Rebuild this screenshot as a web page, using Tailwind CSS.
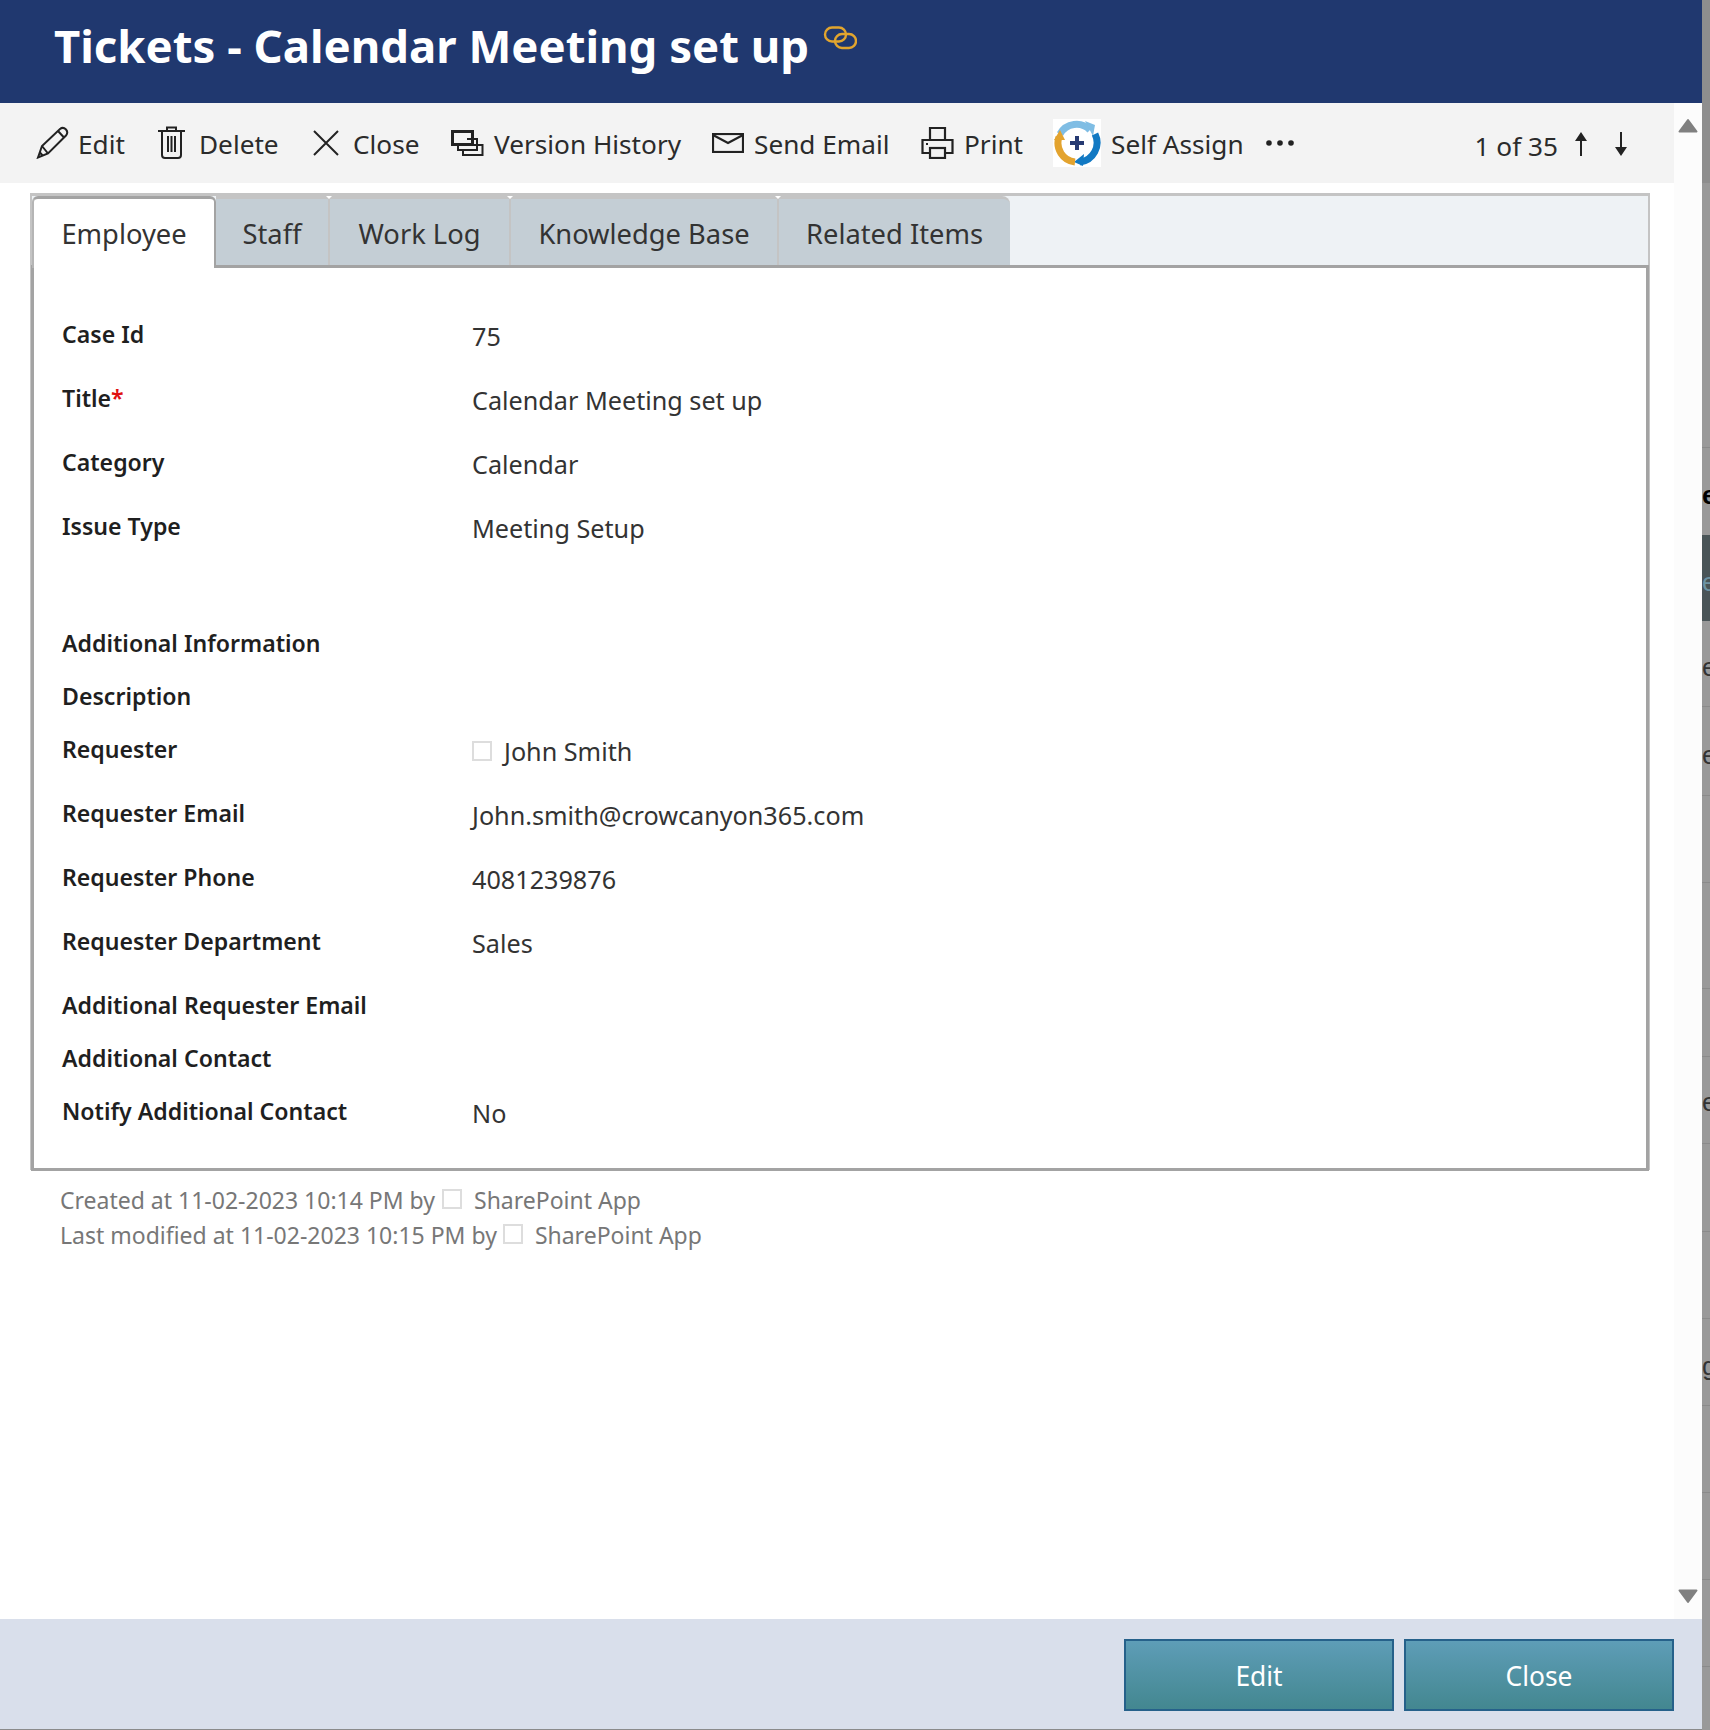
<!DOCTYPE html>
<html lang="en">
<head>
  <meta charset="UTF-8">
  <title>Tickets - Calendar Meeting set up</title>
  <script src="https://cdn.jsdelivr.net/npm/@tailwindcss/browser@4"></script>
</head>
<body class="bg-white">
<div class="w-[1710px] h-[1730px] flex overflow-hidden font-['Noto_Sans','Open_Sans',sans-serif] text-[#2b2b2b]">

  <!-- dialog -->
  <div class="w-[1702px] h-full flex flex-col shrink-0">
    <header class="h-[103px] shrink-0 bg-[#20386f] pl-[54px] pt-[14px] flex items-start">
      <h1 class="text-[45.5px] leading-[62px] font-bold text-white">Tickets - Calendar Meeting set up</h1>
      <svg class="ml-[14px] mt-[12px]" width="34" height="24" viewBox="0 0 34 24" fill="none" stroke="#e2a52e" stroke-width="2.4">
        <rect x="2" y="1.5" width="21" height="14" rx="7"/>
        <rect x="12" y="8" width="21" height="14" rx="7"/>
      </svg>
    </header>

    <div class="flex-1 flex min-h-0">
      <main class="w-[1674px] flex flex-col">
        <!-- toolbar -->
        <div class="h-[80px] shrink-0 bg-[#f3f3f3] flex items-center pl-[36px] text-[26.2px] text-[#2b2b2b]">
          <div class="w-[122px] flex items-center gap-[9px]">
            <svg width="33" height="33" viewBox="0 0 33 33" fill="none" stroke="#222" stroke-width="2"><path d="M2 31.5 L6 20 L24 3 Q27 0.5 30 3.5 Q32.5 6.5 30 9.5 L12 27.5 Z M6 20 L12 27.5 M22 5 L28 11.5 M3.5 26 L7 30"/></svg>
            <span class="pt-[4px]">Edit</span>
          </div>
          <div class="w-[155px] flex items-center gap-[14px]">
            <svg width="27" height="33" viewBox="0 0 27 33" fill="none" stroke="#222" stroke-width="2"><path d="M0 5 H27 M9 5 V1.5 H18 V5 M4 5 V29 Q4 32 7 32 H20 Q23 32 23 29 V5 M10 10 V26 M13.500 10 V26 M17 10 V26"/></svg>
            <span class="pt-[4px]">Delete</span>
          </div>
          <div class="w-[138px] flex items-center gap-[14px]">
            <svg width="26" height="26" viewBox="0 0 26 26" fill="none" stroke="#222" stroke-width="2"><path d="M1 1 L25 25 M25 1 L1 25"/></svg>
            <span class="pt-[4px]">Close</span>
          </div>
          <div class="w-[261px] flex items-center gap-[10px]">
            <svg width="33" height="26" viewBox="0 0 33 26" fill="none" stroke="#222"><path stroke-width="2" d="M22 15 H31.500 V25 H12 V20"/><path stroke-width="2" d="M16 9 H26 V20 H7 V15"/><rect x="1.500" y="1.500" width="20" height="13" stroke-width="3"/></svg>
            <span class="pt-[4px]">Version History</span>
          </div>
          <div class="w-[209px] flex items-center gap-[10px]">
            <svg width="32" height="20" viewBox="0 0 32 20" fill="none" stroke="#222" stroke-width="2.200"><rect x="1" y="1" width="30" height="18"/><path d="M1 2 L16 10 L31 2"/></svg>
            <span class="pt-[4px]">Send Email</span>
          </div>
          <div class="w-[132px] flex items-center gap-[10px]">
            <svg width="33" height="33" viewBox="0 0 33 33" fill="none" stroke="#222" stroke-width="2.200"><path d="M9 14 V2 H24 V14 M9 27 H1.500 V14 H31.500 V27 H24"/><rect x="9" y="22" width="15" height="10"/><path d="M5 18 H7"/></svg>
            <span class="pt-[4px]">Print</span>
          </div>
          <div class="w-[213px] flex items-center gap-[10px]">
            <svg class="bg-white" width="48" height="48" viewBox="0 0 48 48" fill="none">
              <path d="M7 15 A19 19 0 0 1 37 11" stroke="#7fbde4" stroke-width="7"/>
              <path d="M32 2 L42 6 L40 17 Z" fill="#7fbde4"/>
              <path d="M42 15 A19.500 19.500 0 0 1 27 43" stroke="#1279c3" stroke-width="7"/>
              <path d="M31 35 L21 43 L30 47 Z" fill="#1279c3"/>
              <path d="M22 43 A19 19 0 0 1 6 18" stroke="#e3a32e" stroke-width="7"/>
              <path d="M1 21 L7 11 L12 21 Z" fill="#e3a32e"/>
              <path d="M24 17 V31 M17 24 H31" stroke="#263a72" stroke-width="4"/>
            </svg>
            <span class="pt-[4px]">Self Assign</span>
          </div>
          <svg width="28" height="6" viewBox="0 0 28 6" fill="#222"><circle cx="3" cy="3" r="2.800"/><circle cx="14" cy="3" r="2.800"/><circle cx="25" cy="3" r="2.800"/></svg>
          <div class="ml-auto flex items-center pr-[46px]">
            <span class="pt-[7px]">1 of 35</span>
            <svg class="ml-[16px] mt-[2px]" width="14" height="24" viewBox="0 0 14 24" fill="#222"><path d="M7 0 L13 9 H8 V24 H6 V9 H1 Z"/></svg>
            <svg class="ml-[26px] mt-[2px]" width="14" height="24" viewBox="0 0 14 24" fill="#222"><path d="M7 24 L13 15 H8 V0 H6 V15 H1 Z"/></svg>
          </div>
        </div>

        <!-- tabs and form -->
        <div class="mt-[10px] ml-[30px] w-[1620px] bg-[#eef2f5] border-t-[3px] border-x-2 border-[#c4c4c4]">
          <div class="flex h-[69px] text-[27.3px] text-[#333]">
            <div class="w-[184px] h-[72px] -mb-[3px] relative z-10 bg-white rounded-t-[6px] border-t-[3px] border-x-2 border-[#a3a3a3] border-l-[#b5b5b5] flex items-center justify-center pt-[2px]">Employee</div>
            <div class="w-[114px] relative bg-[#c4ced5] border-t-[3px] border-r-2 border-[#c4c4c4] flex items-center justify-center pt-[4px]">Staff<span class="absolute -top-[3px] -right-[4px] z-20 border-x-[3px] border-t-[3px] border-x-transparent border-t-white"></span></div>
            <div class="w-[181px] relative bg-[#c4ced5] border-t-[3px] border-r-2 border-[#c4c4c4] flex items-center justify-center pt-[4px]">Work Log<span class="absolute -top-[3px] -right-[4px] z-20 border-x-[3px] border-t-[3px] border-x-transparent border-t-white"></span></div>
            <div class="w-[268px] relative bg-[#c4ced5] border-t-[3px] border-r-2 border-[#c4c4c4] flex items-center justify-center pt-[4px]">Knowledge Base<span class="absolute -top-[3px] -right-[4px] z-20 border-x-[3px] border-t-[3px] border-x-transparent border-t-white"></span></div>
            <div class="w-[231px] bg-[#c4ced5] border-t-[3px] border-[#c4c4c4] rounded-tr-[8px] flex items-center justify-center pt-[4px]">Related Items</div>
          </div>
          <div class="bg-white border-[3px] border-[#a3a3a3] -ml-px -mr-[1px] -mb-[1px] pt-[40px] pb-[19px] pl-[28px] text-[#1f1f1f]">
            <div class="flex h-[64px]"><div class="w-[410px] text-[23.1px] leading-[52px] font-semibold">Case Id</div><div class="text-[25.2px] leading-[56px] text-[#333]">75</div></div>
            <div class="flex h-[64px]"><div class="w-[410px] text-[23.1px] leading-[52px] font-semibold">Title<span class="text-[#e01010]">*</span></div><div class="text-[25.2px] leading-[56px] text-[#333]">Calendar Meeting set up</div></div>
            <div class="flex h-[64px]"><div class="w-[410px] text-[23.1px] leading-[52px] font-semibold">Category</div><div class="text-[25.2px] leading-[56px] text-[#333]">Calendar</div></div>
            <div class="flex h-[64px]"><div class="w-[410px] text-[23.1px] leading-[52px] font-semibold">Issue Type</div><div class="text-[25.2px] leading-[56px] text-[#333]">Meeting Setup</div></div>
            <div class="h-[53px]"></div>
            <div class="flex h-[53px]"><div class="w-[410px] text-[23.1px] leading-[52px] font-semibold">Additional Information</div></div>
            <div class="flex h-[53px]"><div class="w-[410px] text-[23.1px] leading-[52px] font-semibold">Description</div></div>
            <div class="flex h-[64px]"><div class="w-[410px] text-[23.1px] leading-[52px] font-semibold">Requester</div>
              <div class="flex items-center h-[56px] gap-[12px] text-[25.2px] text-[#333]"><span class="w-[20px] h-[20px] border-2 border-[#ddd]"></span><span class="pt-[1px]">John Smith</span></div></div>
            <div class="flex h-[64px]"><div class="w-[410px] text-[23.1px] leading-[52px] font-semibold">Requester Email</div><div class="text-[25.2px] leading-[56px] text-[#333]">John.smith@crowcanyon365.com</div></div>
            <div class="flex h-[64px]"><div class="w-[410px] text-[23.1px] leading-[52px] font-semibold">Requester Phone</div><div class="text-[25.2px] leading-[56px] text-[#333]">4081239876</div></div>
            <div class="flex h-[64px]"><div class="w-[410px] text-[23.1px] leading-[52px] font-semibold">Requester Department</div><div class="text-[25.2px] leading-[56px] text-[#333]">Sales</div></div>
            <div class="flex h-[53px]"><div class="w-[410px] text-[23.1px] leading-[52px] font-semibold">Additional Requester Email</div></div>
            <div class="flex h-[53px]"><div class="w-[410px] text-[23.1px] leading-[52px] font-semibold">Additional Contact</div></div>
            <div class="flex h-[64px]"><div class="w-[410px] text-[23.1px] leading-[52px] font-semibold">Notify Additional Contact</div><div class="text-[25.2px] leading-[56px] text-[#333]">No</div></div>
          </div>
        </div>

        <!-- created / modified -->
        <div class="mt-[13px] pl-[60px] text-[23px] leading-[35px] text-[#777]">
          <div class="flex items-center">Created at 11-02-2023 10:14 PM by<span class="ml-[7px] mr-[12px] mb-[4px] w-[20px] h-[20px] border-2 border-[#ddd]"></span>SharePoint App</div>
          <div class="flex items-center">Last modified at 11-02-2023 10:15 PM by<span class="ml-[6px] mr-[12px] mb-[4px] w-[20px] h-[20px] border-2 border-[#ddd]"></span>SharePoint App</div>
        </div>
      </main>

      <!-- scrollbar -->
      <div class="w-[28px] bg-[#fcfcfc] flex flex-col items-center justify-between pt-[15px] pb-[15px]">
        <svg width="20" height="15" viewBox="0 0 20 15" fill="#808080" stroke="#808080" stroke-width="2" stroke-linejoin="round"><path d="M10 2 L18.500 13.500 H1.500 Z"/></svg>
        <svg width="20" height="15" viewBox="0 0 20 15" fill="#808080" stroke="#808080" stroke-width="2" stroke-linejoin="round"><path d="M10 13 L18.500 1.500 H1.500 Z"/></svg>
      </div>
    </div>

    <footer class="h-[111px] shrink-0 bg-[#d9dfeb] border-b border-[#8a8a8a] flex justify-end gap-[10px] pt-[20px] pr-[28px]">
      <button class="w-[270px] h-[72px] pt-[3px] border-2 border-[#26618a] bg-linear-to-b from-[#5e9db7] to-[#438790] text-white text-[26.4px]">Edit</button>
      <button class="w-[270px] h-[72px] pt-[3px] border-2 border-[#26618a] bg-linear-to-b from-[#5e9db7] to-[#438790] text-white text-[26.4px]">Close</button>
    </footer>
  </div>

  <!-- page behind the dialog -->
  <div class="w-[8px] h-full shrink-0 overflow-hidden bg-[#999] flex flex-col text-[26px] font-['Liberation_Sans',sans-serif]">
    <div class="h-[183px] shrink-0 bg-[#8e8e8e]"></div>
    <div class="h-[265px] shrink-0 border-b border-[#8a8a8a]"></div>
    <div class="h-[87px] shrink-0 flex items-center pt-[8px] font-bold text-black">e</div>
    <div class="h-[86px] shrink-0 flex items-center pt-[8px] bg-[#4a5558] text-[#6d93a3]">e</div>
    <div class="h-[86px] shrink-0 flex items-center pt-[8px] border-b border-[#8a8a8a] text-[#333]">e</div>
    <div class="h-[89px] shrink-0 flex items-center pt-[8px] border-b border-[#8a8a8a] text-[#333]">e</div>
    <div class="h-[87px] shrink-0 border-b border-[#8a8a8a]"></div>
    <div class="h-[106px] shrink-0 border-b border-[#8a8a8a]"></div>
    <div class="h-[68px] shrink-0 border-b border-[#8a8a8a]"></div>
    <div class="h-[87px] shrink-0 flex items-center pt-[4px] border-b border-[#8a8a8a] text-[#333]">e</div>
    <div class="h-[88px] shrink-0 border-b border-[#8a8a8a]"></div>
    <div class="h-[87px] shrink-0 border-b border-[#8a8a8a]"></div>
    <div class="h-[87px] shrink-0 flex items-center pt-[8px] border-b border-[#8a8a8a] text-[#333]">g</div>
    <div class="h-[87px] shrink-0 border-b border-[#8a8a8a]"></div>
    <div class="h-[87px] shrink-0 border-b border-[#8a8a8a]"></div>
    <div class="h-[87px] shrink-0 border-b border-[#8a8a8a]"></div>
  </div>
</div>
</body>
</html>
